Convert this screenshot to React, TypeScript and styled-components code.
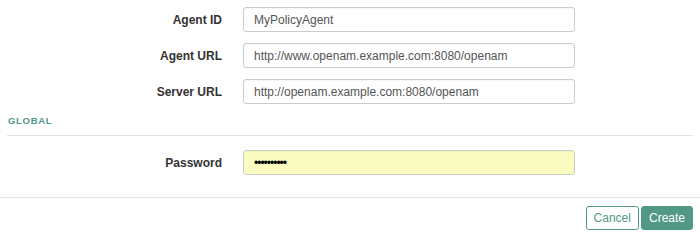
import React from 'react';
import styled, { createGlobalStyle } from 'styled-components';

const GlobalStyle = createGlobalStyle`
  html, body {
    margin: 0;
    padding: 0;
    background: #fff;
  }
  body {
    font-family: "Liberation Sans", Arial, Helvetica, sans-serif;
    color: #333;
  }
  * {
    box-sizing: border-box;
  }
`;

const Modal = styled.div`
  width: 700px;
  display: flex;
  flex-direction: column;
`;

const Body = styled.div`
  padding: 7px 0 22px;
  border-bottom: 1px solid #e5e5e5;
  display: flex;
  flex-direction: column;
`;

const FieldGroup = styled.div`
  display: flex;
  flex-direction: column;
  gap: 11px;
`;

const Row = styled.div`
  display: grid;
  grid-template-columns: 222px 332px;
  column-gap: 21px;
  align-items: center;
`;

const Label = styled.label`
  text-align: right;
  font-size: 12px;
  font-weight: bold;
  color: #333;
`;

const Input = styled.input<{ $autofill?: boolean }>`
  height: 25px;
  width: 100%;
  padding: 0 10px;
  font-family: "Liberation Sans", Arial, sans-serif;
  font-size: 12px;
  color: #555;
  background: ${p => (p.$autofill ? '#fafdbf' : '#fff')};
  border: 1px solid #ccc;
  border-radius: 3px;
  box-shadow: inset 0 1px 1px rgba(0, 0, 0, 0.04);
  outline: none;
  &[type='password'] {
    color: #000;
    font-size: 12px;
    letter-spacing: -1px;
  }
`;

const SectionTitle = styled.h4`
  margin: 11px 7px 0;
  padding: 0 1px 9px;
  border-bottom: 1px solid #e3e3e3;
  font-size: 9.5px;
  font-weight: bold;
  letter-spacing: 0.7px;
  text-transform: uppercase;
  color: #519886;
`;

const SectionFields = styled(FieldGroup)`
  margin-top: 14px;
`;

const Footer = styled.div`
  display: flex;
  justify-content: flex-end;
  gap: 2px;
  padding: 8px 7px;
`;

const Button = styled.button<{ $primary?: boolean }>`
  height: 24px;
  padding: 0 7px;
  font-family: "Liberation Sans", Arial, sans-serif;
  font-size: 12px;
  border-radius: 3px;
  border: 1px solid #519886;
  background: ${p => (p.$primary ? '#519886' : '#fff')};
  color: ${p => (p.$primary ? '#fff' : '#519886')};
  cursor: pointer;
`;

const fields = [
  { label: 'Agent ID', value: 'MyPolicyAgent' },
  { label: 'Agent URL', value: 'http://www.openam.example.com:8080/openam' },
  { label: 'Server URL', value: 'http://openam.example.com:8080/openam' },
];

export default function App() {
  return (
    <>
      <GlobalStyle />
      <Modal>
        <Body>
          <FieldGroup>
            {fields.map(f => (
              <Row key={f.label}>
                <Label>{f.label}</Label>
                <Input type="text" defaultValue={f.value} />
              </Row>
            ))}
          </FieldGroup>
          <SectionTitle>Global</SectionTitle>
          <SectionFields>
            <Row>
              <Label>Password</Label>
              <Input type="password" defaultValue="password12" $autofill />
            </Row>
          </SectionFields>
        </Body>
        <Footer>
          <Button>Cancel</Button>
          <Button $primary>Create</Button>
        </Footer>
      </Modal>
    </>
  );
}
